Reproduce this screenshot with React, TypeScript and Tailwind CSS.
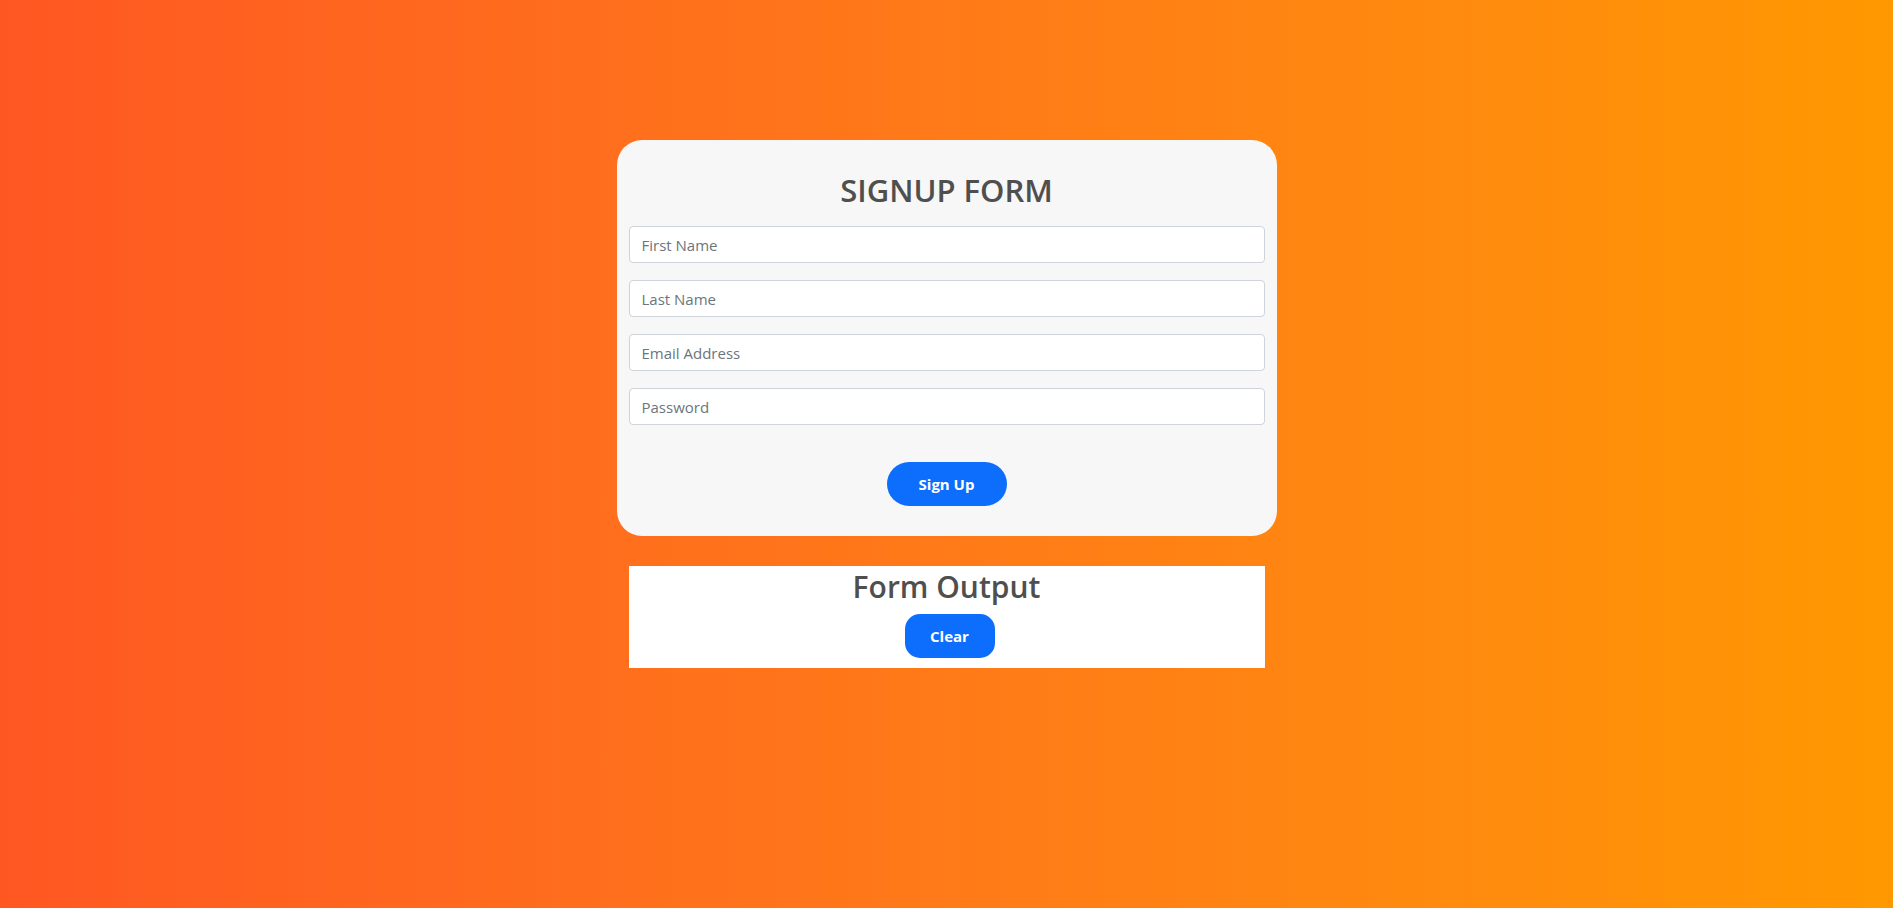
import React, { useState } from "react";

export default function App() {
  const [first, setFirst] = useState("");
  const [last, setLast] = useState("");
  const [email, setEmail] = useState("");
  const [pw, setPw] = useState("");
  const inputCls =
    "block w-full h-[37px] mb-[17px] px-[12px] bg-white border border-[#ced4da] rounded-[4px] text-[15px] text-[#212529] placeholder:text-[#6c757d] outline-none";
  return (
    <div
      className="min-h-screen w-full bg-linear-to-r from-[#ff5722] to-[#ff9800] pt-[140px] flex flex-col items-center"
      style={{ fontFamily: '"Open Sans", "Noto Sans", sans-serif' }}
    >
      <form
        className="w-[660px] bg-[#f7f7f7] rounded-[25px] px-[12px] pt-[29px] pb-[30px] flex flex-col"
        onSubmit={(e) => e.preventDefault()}
      >
        <h1 className="h-[42px] leading-[42px] text-center text-[31px] font-semibold text-[#4f4f4f] mb-[15px]">
          SIGNUP FORM
        </h1>
        <input className={inputCls} placeholder="First Name" value={first} onChange={(e) => setFirst(e.target.value)} />
        <input className={inputCls} placeholder="Last Name" value={last} onChange={(e) => setLast(e.target.value)} />
        <input className={inputCls} placeholder="Email Address" value={email} onChange={(e) => setEmail(e.target.value)} />
        <input className={inputCls} type="password" placeholder="Password" value={pw} onChange={(e) => setPw(e.target.value)} />
        <div className="flex justify-center mt-[20px]">
          <button
            type="submit"
            className="w-[120px] h-[44px] rounded-full bg-[#0d6efd] text-white font-bold text-[15px]"
          >
            Sign Up
          </button>
        </div>
      </form>
      <div className="w-[636px] h-[102px] bg-white mt-[30px] flex flex-col items-center">
        <h2 className="h-[42px] leading-[42px] text-[30px] font-semibold text-[#4f4f4f]">Form Output</h2>
        <button
          type="button"
          className="mt-[6px] ml-[6px] w-[90px] h-[44px] rounded-[15px] bg-[#0d6efd] text-white font-bold text-[15px]"
          onClick={() => {
            setFirst("");
            setLast("");
            setEmail("");
            setPw("");
          }}
        >
          Clear
        </button>
      </div>
    </div>
  );
}
